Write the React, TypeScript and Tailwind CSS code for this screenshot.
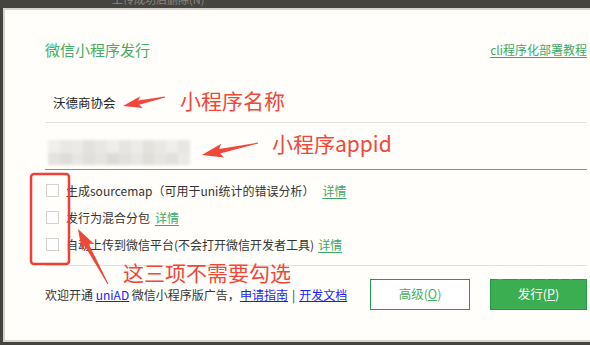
import React from "react";

const FONT = { fontFamily: '"Noto Sans CJK SC", "Noto Sans", sans-serif' };

// 截图工具风格的箭头：尾部细，头部宽
function arrowPoints(x1: number, y1: number, x2: number, y2: number, head = 15, barb = 6) {
  const dx = x2 - x1;
  const dy = y2 - y1;
  const len = Math.hypot(dx, dy);
  const ux = dx / len;
  const uy = dy / len;
  const nx = -uy;
  const ny = ux;
  const neckX = x2 - ux * head;
  const neckY = y2 - uy * head;
  const backX = x2 - ux * (head + 3);
  const backY = y2 - uy * (head + 3);
  const p = (x: number, y: number) => `${x.toFixed(1)},${y.toFixed(1)}`;
  return [
    p(x1 + nx * 0.4, y1 + ny * 0.4),
    p(neckX + nx * 2.2, neckY + ny * 2.2),
    p(backX + nx * barb, backY + ny * barb),
    p(x2, y2),
    p(backX - nx * barb, backY - ny * barb),
    p(neckX - nx * 2.2, neckY - ny * 2.2),
    p(x1 - nx * 0.4, y1 - ny * 0.4),
  ].join(" ");
}

// 打码的 appid
const MOSAIC = [
  ["#f0efeb", "#e9e8e4", "#ebeae6", "#e2e1dd", "#e8e7e3", "#eeede9", "#e6e5e1", "#ecebe7", "#e3e2de", "#e9e8e4", "#efeeea", "#e7e6e2"],
  ["#e4e3df", "#dedddA", "#e7e6e2", "#e0dfdb", "#e5e4e0", "#dcdbd7", "#e2e1dd", "#e8e7e3", "#dfded9", "#e6e5e1", "#e1e0dc", "#ebeae6"],
];

function Checkbox() {
  return <span className="w-[13px] h-[13px] border border-[#d3d2ce] bg-white shrink-0" />;
}

function Row({ text, gap = "ml-[8px]" }: { text: string; gap?: string }) {
  return (
    <div className="h-[27px] flex items-center pl-[1px]">
      <Checkbox />
      <span className="ml-[7px] text-[12px] text-[#333]">{text}</span>
      <a className={`${gap} text-[12px] text-[#3aa866] underline underline-offset-2`}>详情</a>
    </div>
  );
}

export default function App() {
  return (
    <div className="w-[590px] h-[345px] bg-[#46443e] flex flex-col overflow-hidden relative" style={FONT}>
      {/* 顶部窗口条 */}
      <div className="h-[8px] shrink-0 relative overflow-hidden">
        <span className="absolute left-[112px] top-[-9px] text-[11px] text-[#8a877f] whitespace-nowrap">上传成功后删除(N)</span>
      </div>

      <div className="flex-1 flex pl-[3px] pb-[3px]">
        <div className="flex-1 bg-[#fffefa] border-t-2 border-l-2 border-b-2 border-[#d5d4cf] flex flex-col pl-[40px] pr-[3px]">
          {/* 标题 */}
          <div className="mt-[30px] h-[20px] flex items-center justify-between">
            <span className="text-[15px] text-[#45ad62]">微信小程序发行</span>
            <a className="text-[12px] text-[#3aa866] underline underline-offset-2">cli程序化部署教程</a>
          </div>

          {/* 名称 */}
          <div className="mt-[25px] h-[38px] border-b border-[#e3e2de] flex items-center pl-[8px] text-[12.5px] text-[#222]">
            沃德商协会
          </div>

          {/* appid */}
          <div className="h-[47px] border-b border-[#4cb466] pl-[3px] pt-[17px]">
            <div className="w-[142px] h-[25px] flex flex-col blur-[1.5px]">
              {MOSAIC.map((r, i) => (
                <div key={i} className="flex flex-1">
                  {r.map((c, j) => (
                    <div key={j} className="flex-1" style={{ background: c }} />
                  ))}
                </div>
              ))}
            </div>
          </div>

          {/* 选项 */}
          <div className="pt-[7px] pb-[7px] border-b border-[#e3e2de]">
            <Row text="生成sourcemap（可用于uni统计的错误分析）" gap="ml-[8px]" />
            <Row text="发行为混合分包" gap="ml-[5px]" />
            <Row text="自动上传到微信平台(不会打开微信开发者工具)" gap="ml-[4px]" />
          </div>

          {/* 底部 */}
          <div className="mt-[13px] h-[31px] flex items-center">
            <span className="text-[12px] text-[#333] whitespace-nowrap">
              欢迎开通 <a className="text-[#1a1aff] underline">uniAD</a> 微信小程序版广告，
              <a className="text-[#1a1aff] underline">申请指南</a>
              <span className="mx-[4px]">|</span>
              <a className="text-[#1a1aff] underline">开发文档</a>
            </span>
            <div className="ml-auto flex gap-[20px]">
              <button className="w-[100px] h-[31px] border border-[#1f9e4a] bg-white text-[12.5px] text-[#45ad62]">高级(<span className="underline">O</span>)</button>
              <button className="w-[97px] h-[31px] border border-[#22994a] bg-[#3aae50] text-[12.5px] text-white">发行(<span className="underline">P</span>)</button>
            </div>
          </div>
        </div>
      </div>

      {/* 水印 */}
      <span className="absolute left-[490px] top-[255px] text-[26px] leading-[28px] tracking-[6px] text-white/20 pointer-events-none">OMIN</span>

      {/* 标注 */}
      <svg className="absolute inset-0 pointer-events-none" width={590} height={345}>
        <polygon points={arrowPoints(165, 97, 123, 106, 16, 6)} fill="#f0473b" />
        <polygon points={arrowPoints(258, 143, 202, 155, 18, 7)} fill="#f0473b" />
        <polygon points={arrowPoints(108, 284, 78, 229, 18, 7)} fill="#f0473b" />
        <rect x={31} y={174} width={38} height={90} rx={3} fill="none" stroke="#ee3f3a" strokeWidth={2.5} />
      </svg>
      <span className="absolute left-[180px] top-[86px] text-[21px] leading-[28px] text-[#f0473b]">小程序名称</span>
      <span className="absolute left-[272px] top-[129px] text-[21px] leading-[28px] text-[#f0473b]">小程序appid</span>
      <span className="absolute left-[123px] top-[258px] text-[21px] leading-[28px] text-[#f0473b]">这三项不需要勾选</span>
    </div>
  );
}
